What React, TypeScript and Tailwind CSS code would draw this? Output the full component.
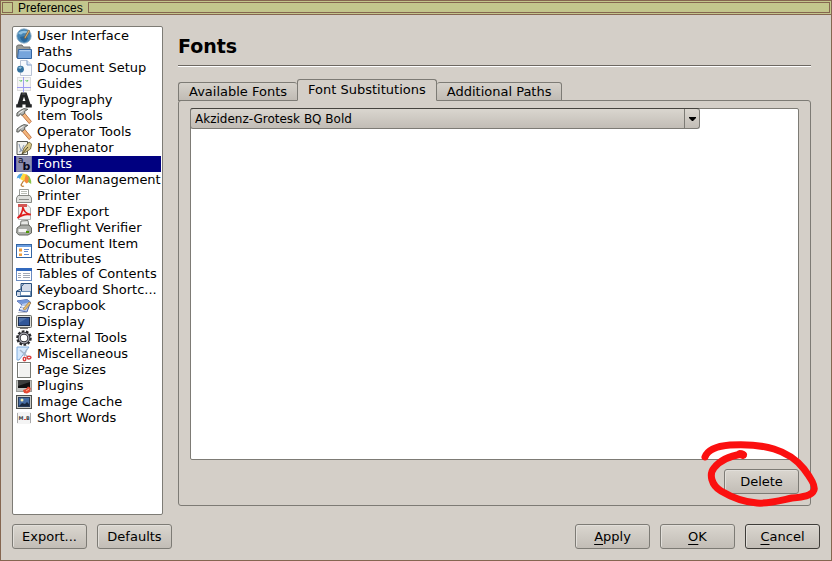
import { useState } from "react";
import type { ReactNode } from "react";

interface Category {
  label: string;
  icon: ReactNode;
}

const hammer = (
  <>
    <path d="M5.2 6.2 L7.8 4.2 L15.3 13.3 L13.2 15.6Z" fill="#f3b67c" stroke="#b5602f" strokeWidth=".8" />
    <path d="M.8 8 L1 5 L4.5 2.3 L8 .6 L11.8 1.3 L8.6 3.4 L8.8 5.2 L6 7.4 L4.2 5.8 L2.8 8Z" fill="#b5b7b4" stroke="#4f514d" strokeWidth=".9" />
    <path d="M2.8 5.2 L7.5 2.2" stroke="#f4f4f4" />
  </>
);

const categories: Category[] = [
  {
    label: "User Interface",
    icon: (
      <>
        <circle cx="8" cy="8" r="7.2" fill="#4484b4" stroke="#89a9c0" strokeWidth=".8" />
        <path d="M2 5 Q7 1 13 4 Q9 6 7 5 Q5 8 2 5Z" fill="#8fc0df" />
        <path d="M4 9 Q9 7 12 10 Q11 14 8 14 Q5 13 4 9Z" fill="#2b6799" />
        <path d="M8 10 L12.5 2 L14 3 L9.5 10.5Z" fill="#d8b27a" stroke="#6c5530" strokeWidth=".6" />
      </>
    ),
  },
  {
    label: "Paths",
    icon: (
      <>
        <path d="M.7 13.5 V2 L1.7 1 H6 L7.5 3 H14 V13.5Z" fill="#9a9c98" stroke="#686a66" strokeWidth=".9" />
        <path d="M2.5 5.5 H15.5 V14.5 H1.5Z" fill="#76a5dc" stroke="#3566a2" />
        <path d="M3.5 6.7 H14.4" stroke="#bdd5f2" />
      </>
    ),
  },
  {
    label: "Document Setup",
    icon: (
      <>
        <path d="M4.5 .5 H11 L15.5 5 V15.5 H4.5Z" fill="#f7f9fc" stroke="#b9c3d5" />
        <path d="M11 .5 V5 H15.5" fill="#dbe6f5" stroke="#7b9bc8" />
        <circle cx="4.5" cy="9.2" r="3.4" fill="#33729f" />
        <path d="M2 8 Q4 5.5 6 7 L4.5 9Z" fill="#91bdd5" />
      </>
    ),
  },
  {
    label: "Guides",
    icon: (
      <>
        <rect x="1.5" y="1.5" width="13" height="13" fill="#f4f4f4" stroke="#ddd" />
        <path d="M7.5 1 V16 M1 11.5 H15" stroke="#9c9cf2" />
        <path d="M3.5 4 L5 5.5 L6 4 M9.5 4 L11 5.5 L12 4" fill="none" stroke="#55c45b" />
      </>
    ),
  },
  {
    label: "Typography",
    icon: (
      <>
        <path d="M5 .5 H10.5 L14.5 12.3 H15.8 V15.6 H9.6 V12.4 H6.4 V15.6 H.2 V12.3 H1.5Z" fill="#222425" />
        <path d="M8 4.8 L9.4 9 H6.6Z" fill="#fff" />
        <path d="M6 2 H9.5" stroke="#606366" />
      </>
    ),
  },
  { label: "Item Tools", icon: hammer },
  { label: "Operator Tools", icon: hammer },
  {
    label: "Hyphenator",
    icon: (
      <>
        <path d="M1 1.5 H11.5 V14.5 H1Z" fill="#f0f1ed" stroke="#555753" />
        <path d="M3 4 L5 11 L8 5 M3 12 Q6 9 9 12" fill="none" stroke="#8999b5" />
        <path d="M6 14 L8 8 L13 2 L15.7 4 L14.5 9 L10 12Z" fill="#d7c687" stroke="#665b32" strokeWidth=".8" />
        <path d="M6 14 L12 7" stroke="#4d4528" />
      </>
    ),
  },
  {
    label: "Fonts",
    icon: (
      <>
        <rect x=".5" y=".5" width="15" height="15" fill="#8b8db0" stroke="#7779a1" />
        <text x="2" y="7" fontSize="9" fill="#05051f">a</text>
        <text x="6.5" y="14" fontSize="11" fontWeight="bold" fill="#05051f">b</text>
      </>
    ),
  },
  {
    label: "Color Management",
    icon: (
      <>
        <path d="M8 8 L5 13 Q6 15 8 14" fill="none" stroke="#bc7b35" strokeWidth="1.2" />
        <path d="M.7 6.5 Q1.5 1.3 7 1.5 L4 7 L2.5 5.7Z" fill="#4fa5e3" />
        <path d="M7 1.5 L11 2.5 L8 9 L4 7Z" fill="#ffdc3a" />
        <path d="M11 2.5 Q15.8 5.5 15.2 12 L12 10Z" fill="#8bc34a" />
        <path d="M10 2.2 L13 6 L12 10.5 L10.5 11.5 L8 9Z" fill="#f58a3c" />
      </>
    ),
  },
  {
    label: "Printer",
    icon: (
      <>
        <path d="M3.5 1.5 H12.5 V8 H3.5Z" fill="#fff" stroke="#999b97" />
        <path d="M5 3.5 H11 M5 5.5 H11" stroke="#babdb6" />
        <path d="M2 7.5 H14 L15.5 10 V14.5 H.5 V10Z" fill="#dedfdc" stroke="#888a85" />
        <path d="M3 11.5 H13" stroke="#8b8d89" />
      </>
    ),
  },
  {
    label: "PDF Export",
    icon: (
      <>
        <path d="M2.5 .5 H11 L14.5 4 V15.5 H2.5Z" fill="#f1f1f1" stroke="#b2b2b2" />
        <rect x="2" y="0" width="9" height="3" fill="#d35855" />
        <path d="M7 3 Q7.5 9 14.8 10.7 Q8 9 1.5 14.2 Q6.5 10 7 3Z" fill="none" stroke="#df1d1d" strokeWidth="1.7" />
      </>
    ),
  },
  {
    label: "Preflight Verifier",
    icon: (
      <>
        <path d="M5 1 L12 .5 L13 7 L4 8Z" fill="#e7e8e5" stroke="#777974" />
        <path d="M1 8 L5 5 H13 L15.5 8 V13 L12 15 H3 L.7 13Z" fill="#aaaca7" stroke="#666862" />
        <path d="M2.5 9 H11 L10 12 H2.5Z" fill="#f5f5f3" />
        <path d="M10 12 H13" stroke="#4e9a06" strokeWidth="2" />
      </>
    ),
  },
  {
    label: "Document Item\nAttributes",
    icon: (
      <>
        <rect x=".5" y="1.5" width="15" height="13" fill="#fff" stroke="#3465a4" />
        <rect x="1" y="2" width="14" height="2" fill="#6b9ee0" />
        <path d="M3 5.5 H6 V8.5 H3Z M3 10.5 H6 V13 H3Z" fill="#f09d3b" />
        <path d="M8 6.5 H13 M8 8.5 H12 M8 11.5 H13" stroke="#628cd1" />
      </>
    ),
  },
  {
    label: "Tables of Contents",
    icon: (
      <>
        <rect x=".5" y="2.5" width="15" height="12" fill="#fff" stroke="#698bc1" />
        <rect x="0" y="2" width="16" height="3" fill="#3269bd" />
        <path d="M2 7.5 H5 M7 7.5 H14 M2 9.5 H5 M7 9.5 H14 M2 11.5 H5 M7 11.5 H14" stroke="#a2a9b6" />
      </>
    ),
  },
  {
    label: "Keyboard Shortc...",
    icon: (
      <>
        <path d="M5 1.5 H15.5 V14.5 H1.5 L.5 13.5 V9 L5 7Z" fill="#d1dae9" stroke="#284f7c" />
        <path d="M5.5 9 V4.5 L8 1.5 H12 M.5 9.5 H15" fill="none" stroke="#284f7c" />
        <rect x="4.5" y="9.5" width="10" height="4" fill="#fff" stroke="#6c8db4" />
      </>
    ),
  },
  {
    label: "Scrapbook",
    icon: (
      <>
        <path d="M1 3 L11 1.5 L14.5 4 L11 14 L3 12.5 L6 7Z" fill="#b4c8ed" stroke="#536cae" />
        <path d="M1 3 L11 1.5 L14 4 L6 6Z" fill="#7296da" />
        <path d="M5 8 L11 9 M4 10.5 L10 11.5" stroke="#fff" />
        <path d="M7 11 L13 4 L15 5 L9 12Z" fill="#e7bf70" stroke="#996c32" strokeWidth=".6" />
        <path d="M2 14.5 H11" stroke="#c3c5ca" />
      </>
    ),
  },
  {
    label: "Display",
    icon: (
      <>
        <rect x=".5" y="1.5" width="15" height="12" rx="1" fill="#dbdcd8" stroke="#666862" />
        <rect x="2.5" y="3.5" width="11" height="8" fill="#315799" stroke="#1d2f52" />
        <path d="M3 9 L11 4 H3Z" fill="#5174ae" />
        <path d="M4 14.5 H12" stroke="#777" />
      </>
    ),
  },
  {
    label: "External Tools",
    icon: (
      <>
        <circle cx="8" cy="8" r="6.6" fill="none" stroke="#28282b" strokeWidth="2.4" strokeDasharray="2.6 1.5" />
        <circle cx="8" cy="8" r="4.8" fill="#fff" stroke="#2f2f34" strokeWidth="3" />
        <circle cx="8" cy="8" r="4.8" fill="none" stroke="#a9a9b2" strokeWidth="1.2" />
      </>
    ),
  },
  {
    label: "Miscellaneous",
    icon: (
      <>
        <path d="M1 1 H13 L3 14 H1Z" fill="#d5e8fc" stroke="#80acdc" />
        <path d="M4 4 L12 11 M11 3 L8 10" stroke="#a7b6c9" strokeWidth="1.5" />
        <ellipse cx="8.5" cy="13" rx="1.3" ry="1.8" fill="none" stroke="#da4242" strokeWidth="1.4" />
        <ellipse cx="13" cy="11.6" rx="2" ry="1.4" fill="none" stroke="#da4242" strokeWidth="1.4" />
      </>
    ),
  },
  {
    label: "Page Sizes",
    icon: (
      <>
        <rect x="1.5" y=".5" width="13" height="15" fill="#f2f2f1" stroke="#777974" />
        <path d="M2.5 14.5 V1.5 H13.5" fill="none" stroke="#fff" />
      </>
    ),
  },
  {
    label: "Plugins",
    icon: (
      <>
        <rect x=".5" y="2.5" width="15" height="11" fill="#c1c2bf" stroke="#999b97" />
        <path d="M2 2 H14 V10 H2Z" fill="#111" />
        <path d="M2 2 H14 V4 L2 8Z" fill="#3d3e3d" />
        <path d="M7 12 L10 11 L12 8.5 L14.8 10 L14 14 L11 15.5 L8 15Z" fill="#e54832" />
        <path d="M10 13 L13 11" stroke="#ffb69b" />
      </>
    ),
  },
  {
    label: "Image Cache",
    icon: (
      <>
        <rect x=".5" y="1.5" width="15" height="13" fill="#c9cac6" stroke="#50524f" />
        <rect x="2.5" y="3.5" width="11" height="9" fill="#456ca3" stroke="#273c5c" />
        <path d="M3 12 L6 9 L9 10 L11 8 L13 10 V12Z" fill="#19283f" />
        <circle cx="6" cy="6" r="1.5" fill="#f5f0b4" />
      </>
    ),
  },
  {
    label: "Short Words",
    icon: (
      <>
        <rect x="1" y="2" width="14" height="12" fill="#f4f4f4" />
        <path d="M1.5 3 V13 M14.5 3 V13" stroke="#aaa" />
        <text x="2.5" y="10" fontSize="5" fontWeight="bold" fill="#444">M</text>
        <text x="10" y="10" fontSize="5" fontWeight="bold" fill="#444">B</text>
        <path d="M8 9.5 H10" stroke="#e44343" />
      </>
    ),
  },
];

const tabs = ["Available Fonts", "Font Substitutions", "Additional Paths"];

interface PushButtonProps {
  children: ReactNode;
  isDefault?: boolean;
}

const PushButton = ({ children, isDefault }: PushButtonProps) => (
  <button
    type="button"
    className={`block h-[25px] w-[75px] rounded-[3px] border bg-linear-to-b from-[#dad6cf] to-[#c2bdb6] text-center leading-4 shadow-[inset_1px_1px_0_#e2dfda] ${
      isDefault ? "border-[#3e3c38]" : "border-[#7d7b75]"
    }`}
  >
    {children}
  </button>
);

const TitleBar = () => (
  <header className="flex h-[14px] items-center border-b border-[#856650] bg-[#c3c68d] px-px">
    <span className="h-[11px] w-[11px] border border-[#856650]" />
    <h1 className="px-[5px] font-['Liberation_Sans',sans-serif] text-[12px] leading-3">Preferences</h1>
    <span className="h-[11px] flex-1 border border-[#856650]" />
  </header>
);

const App = () => {
  const [category, setCategory] = useState("Fonts");
  const [tab, setTab] = useState(tabs[1]);

  return (
    <div className="flex min-h-screen flex-col border border-[#856650] bg-[#d4cfc8] font-['DejaVu_Sans',sans-serif] text-[13px] text-black">
      <TitleBar />
      <div className="flex flex-1 flex-col gap-[9px] p-[11px]">
        <main className="flex flex-1 gap-[15px]">
          <nav className="w-[151px] shrink-0 rounded-[2px] border border-[#7d7b75] bg-white p-px">
            <ul>
              {categories.map(({ label, icon }) => (
                <li key={label}>
                  <button
                    type="button"
                    onClick={() => setCategory(label)}
                    className={`flex w-full items-start gap-[5px] pl-[2px] text-left leading-[15px] whitespace-pre ${
                      category === label ? "bg-[#000080] text-white" : ""
                    }`}
                  >
                    <svg className="h-4 w-4 shrink-0 self-center" viewBox="0 0 16 16" aria-hidden="true">
                      {icon}
                    </svg>
                    <span>{label}</span>
                  </button>
                </li>
              ))}
            </ul>
          </nav>

          <section className="flex min-w-0 flex-1 flex-col pr-[9px] pb-[9px]">
            <h2 className="h-[39px] pt-2 text-[19px] leading-6 font-bold">{category}</h2>
            <hr className="h-[2px] border-t border-b border-t-[#6d6862] border-b-white" />

            <div role="tablist" className="z-10 -mb-px flex items-end pt-3">
              {tabs.map((name) => (
                <button
                  key={name}
                  type="button"
                  role="tab"
                  aria-selected={tab === name}
                  onClick={() => setTab(name)}
                  className={`rounded-t-[3px] border border-[#7d7b75] px-[10px] ${
                    tab === name
                      ? "h-[22px] border-b-transparent bg-[#d4cfc8]"
                      : "h-[19px] bg-linear-to-b from-[#d6d2cb] to-[#c0bbb4] first:border-r-0 last:border-l-0"
                  }`}
                >
                  <span className="block leading-4">{name}</span>
                </button>
              ))}
            </div>

            <div role="tabpanel" className="flex flex-1 flex-col rounded-[3px] border border-[#7d7b75] px-[11px] pt-[7px] pb-[11px]">
              <div className="flex-1 rounded-[2px] border border-[#7d7b75] bg-white">
                <div className="relative -mt-px -ml-px max-w-[510px]">
                  <select
                    aria-label="Replacement font"
                    className="block h-[21px] w-full appearance-none rounded-[3px] border border-[#7d7b75] border-t-[#45433e] bg-linear-to-b from-[#dad6cf] to-[#c2bdb6] pr-5 pl-1 text-[12px]"
                  >
                    <option>Akzidenz-Grotesk BQ Bold</option>
                  </select>
                  <span className="pointer-events-none absolute inset-y-px right-px flex w-[15px] items-center justify-center border-l border-[#7d7b75]">
                    <svg className="h-1 w-[7px]" viewBox="0 0 7 4" aria-hidden="true">
                      <path d="M0 0 H7 V1 L4 4 H3 L0 1Z" />
                    </svg>
                  </span>
                </div>
              </div>
              <div className="relative mt-[9px] self-end">
                <PushButton>Delete</PushButton>
                <svg
                  className="pointer-events-none absolute -top-8 -left-7 h-20 w-[132px]"
                  viewBox="0 0 132 80"
                  fill="none"
                  stroke="#fb1010"
                  strokeWidth="7"
                  strokeLinecap="round"
                  strokeLinejoin="round"
                  aria-hidden="true"
                >
                  <path d="M9 20 C12 12 22 9 34 8 C51 7 65 8 78 12 C91 16 101 23 108 32 C114 40 120 49 118 53 C116 59 107 60 96 61 C82 64 71 67 61 66 C48 65 35 60 25 54 C15 48 13 37 18 31 C24 23 34 19 46 17" />
                  <path d="M44 17 L47 18" strokeWidth="8" />
                </svg>
              </div>
            </div>
          </section>
        </main>

        <footer className="flex justify-between">
          <div className="flex gap-[10px]">
            <PushButton>Export...</PushButton>
            <PushButton>Defaults</PushButton>
          </div>
          <div className="flex gap-[10px]">
            <PushButton>
              <u className="underline-offset-3">A</u>pply
            </PushButton>
            <PushButton>
              <u className="underline-offset-3">O</u>K
            </PushButton>
            <PushButton isDefault>
              <u className="underline-offset-3">C</u>ancel
            </PushButton>
          </div>
        </footer>
      </div>
    </div>
  );
};

export default App;
